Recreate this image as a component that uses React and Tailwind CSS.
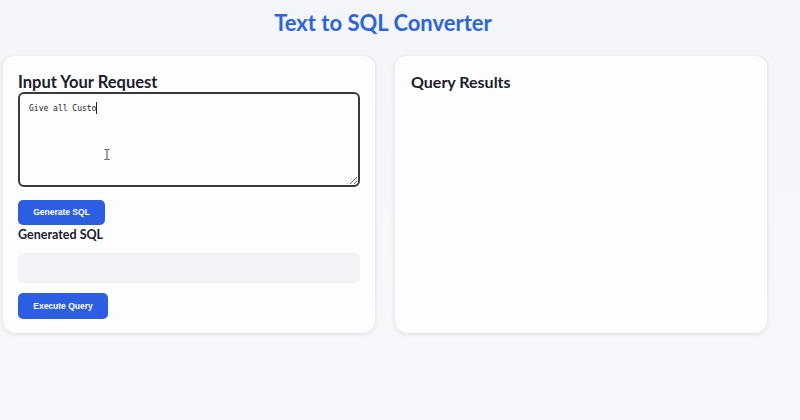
export default function App() {
  return (
    <div className="h-[420px] w-[800px] overflow-hidden bg-gradient-to-b from-[#f4f5f9] to-[#f7f8fb] font-['Lato',sans-serif] text-[#1f2937]">
      <h1 className="pt-[9px] pr-[34px] text-center text-[22px] leading-[28px] font-bold text-[#2b63e0]">
        Text to SQL Converter
      </h1>

      <div className="mt-[19px] ml-[3px] flex w-[764px] gap-[20px]">
        {/* left card */}
        <div className="h-[277px] w-[372px] rounded-[12px] bg-[#fdfdff] px-[15px] pt-[16px] shadow-[0_1px_4px_rgba(0,0,0,0.12)]">
          <h2 className="text-[16.5px] leading-[20px] font-bold text-[#1a202c]">Input Your Request</h2>
          <div className="relative">
            <textarea
              className="block h-[95px] w-[342px] resize-y rounded-[6px] border-2 border-[#3a3a3a] bg-[#fdfdff] px-[9px] py-[8px] font-['DejaVu_Sans_Mono',monospace] text-[8px] leading-[14px] text-[#1a1a1a] outline-none"
              defaultValue="Give all Custo"
            />
            <span className="absolute top-[10px] left-[78px] h-[12px] w-px bg-[#222]" />
            <svg className="absolute top-[57px] left-[86px]" width="6" height="11" viewBox="0 0 6 11">
              <path d="M0.5 0.5h2M3.5 0.5h2M3 0.5v10M0.5 10.5h2M3.5 10.5h2" stroke="#444" strokeWidth="1" fill="none" />
            </svg>
          </div>
          <button className="mt-[13px] h-[25px] w-[87px] rounded-[5px] bg-[#2b5ee0] font-['Liberation_Sans',sans-serif] text-[8.5px] font-bold text-white">
            Generate SQL
          </button>
          <h3 className="mt-[1px] text-[12.5px] leading-[18px] font-bold text-[#1a202c]">Generated SQL</h3>
          <div className="mt-[9px] h-[30px] w-[342px] rounded-[5px] bg-[#f1f3f6]" />
          <button className="mt-[10px] h-[26px] w-[90px] rounded-[5px] bg-[#2b5ee0] font-['Liberation_Sans',sans-serif] text-[8.5px] font-bold text-white">
            Execute Query
          </button>
        </div>

        {/* right card */}
        <div className="h-[277px] w-[372px] rounded-[12px] bg-[#fdfdff] px-[16px] pt-[16px] shadow-[0_1px_4px_rgba(0,0,0,0.12)]">
          <h2 className="text-[16px] leading-[20px] font-bold text-[#1a202c]">Query Results</h2>
        </div>
      </div>
    </div>
  )
}
